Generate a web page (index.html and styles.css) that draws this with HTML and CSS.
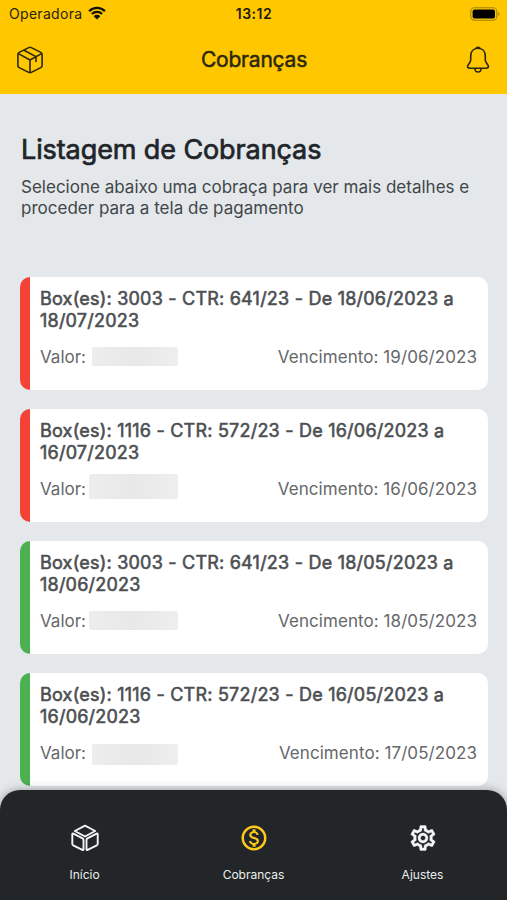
FILE: index.html
```html
<!DOCTYPE html>
<html lang="pt-BR">
<head>
<meta charset="utf-8">
<meta name="viewport" content="width=device-width, initial-scale=1">
<title>Cobranças</title>
<link rel="stylesheet" href="styles.css">
</head>
<body>
<div class="app">
  <header class="top">
    <div class="status">
      <div class="carrier"><span class="operator">Operadora</span>
        <svg class="wifi" viewBox="0 0 18 14"><path d="M1.1 5.2a11.2 11.2 0 0 1 15.8 0M3.9 8a7.2 7.2 0 0 1 10.2 0" fill="none" stroke="#111" stroke-width="2.3"/><path d="M9 13.5 5.7 10.2a4.7 4.7 0 0 1 6.6 0z" fill="#111"/></svg>
      </div>
      <time class="clock">13:12</time>
      <svg class="battery" viewBox="0 0 30 14"><rect x=".8" y=".8" width="26" height="12.4" rx="3.6" fill="none" stroke="#a18412" stroke-width="1.1"/><rect x="2.6" y="2.6" width="22.4" height="8.8" rx="2" fill="#000"/><path d="M28.3 5v4q1.3-.6 1.3-2t-1.3-2z" fill="#a18412"/></svg>
    </div>
    <div class="bar">
      <svg class="box-icon" viewBox="0 0 28 28" fill="none" stroke="#2b2710" stroke-width="1.6" stroke-linejoin="round" stroke-linecap="round"><path d="M12.7 1.6q1.3-.7 2.6 0l9.5 4.8q1.3.7 1.3 2.1v11q0 1.4-1.3 2.1l-9.5 4.8q-1.3.7-2.6 0l-9.5-4.8q-1.3-.7-1.3-2.1v-11q0-1.4 1.3-2.1z"/><path d="M2.4 7.6 14 14l11.6-6.4M14 14v12.4M8 4.3l12 6.3v4.8"/></svg>
      <h1 class="title">Cobranças</h1>
      <svg class="bell-icon" viewBox="0 0 24 28" fill="none" stroke="#2b2710" stroke-width="1.6" stroke-linejoin="round" stroke-linecap="round"><path d="M12 2.3c-4.7 0-7.3 3.5-7.3 8v3.7c0 3-3.2 4.6-3.2 6.6 0 1.3 1.2 1.6 2.5 1.6h16c1.3 0 2.5-.3 2.5-1.6 0-2-3.2-3.6-3.2-6.6v-3.7c0-4.5-2.6-8-7.3-8zM10 2.3q.3-1.1 2-1.1t2 1.1M8.7 22.5c.3 2.3 1.6 3.5 3.3 3.5s3-1.2 3.3-3.5"/></svg>
    </div>
  </header>
  <main class="content">
    <h2 class="heading">Listagem de Cobranças</h2>
    <p class="intro">Selecione abaixo uma cobraça para ver mais detalhes e<br>proceder para a tela de pagamento</p>
    <div class="list">
      <article class="card late">
        <h3 class="name">Box(es): 3003 - CTR: 641/23 - De 18/06/2023 a<br>18/07/2023</h3>
        <div class="row"><span class="label">Valor:</span><span class="redacted inset"></span><span class="due">Vencimento: 19/06/2023</span></div>
      </article>
      <article class="card late">
        <h3 class="name">Box(es): 1116 - CTR: 572/23 - De 16/06/2023 a<br>16/07/2023</h3>
        <div class="row"><span class="label">Valor:</span><span class="redacted tall"></span><span class="due">Vencimento: 16/06/2023</span></div>
      </article>
      <article class="card paid">
        <h3 class="name">Box(es): 3003 - CTR: 641/23 - De 18/05/2023 a<br>18/06/2023</h3>
        <div class="row"><span class="label">Valor:</span><span class="redacted"></span><span class="due">Vencimento: 18/05/2023</span></div>
      </article>
      <article class="card paid">
        <h3 class="name">Box(es): 1116 - CTR: 572/23 - De 16/05/2023 a<br>16/06/2023</h3>
        <div class="row"><span class="label">Valor:</span><span class="redacted inset low"></span><span class="due">Vencimento: 17/05/2023</span></div>
      </article>
    </div>
  </main>
  <nav class="tabs">
    <a class="tab">
      <svg class="tab-icon" viewBox="0 0 30 30" fill="none" stroke="#f4f5f5" stroke-width="1.9" stroke-linejoin="round"><path d="M15 2.700 25.200 8 15 13.500 4.800 8zM2.300 11.400q0-1.200 1.100-.7l9.200 4.700q.9.500.9 1.500v9.300q0 1.200-1.100.7l-9.200-4.600q-.9-.5-.9-1.500zM27.700 11.400q0-1.200-1.100-.7l-9.200 4.700q-.9.500-.9 1.500v9.300q0 1.200 1.100.7l9.200-4.600q.9-.5.9-1.500z"/></svg>
      <span class="tab-label">Início</span>
    </a>
    <a class="tab active">
      <svg class="tab-icon" viewBox="0 0 24 24" fill="currentColor"><path d="M12 2C6.480 2 2 6.480 2 12s4.480 10 10 10 10-4.480 10-10S17.520 2 12 2zm0 18c-4.410 0-8-3.590-8-8s3.590-8 8-8 8 3.590 8 8-3.590 8-8 8zm.31-8.860c-1.770-.45-2.340-.94-2.340-1.670 0-.84.79-1.430 2.100-1.430 1.380 0 1.900.66 1.940 1.640h1.710c-.05-1.340-.87-2.570-2.490-2.970V5H10.900v1.690c-1.510.32-2.720 1.300-2.720 2.810 0 1.790 1.490 2.690 3.660 3.210 1.950.46 2.340 1.150 2.340 1.870 0 .53-.39 1.390-2.100 1.390-1.600 0-2.230-.72-2.320-1.640H8.040c.1 1.700 1.360 2.660 2.860 2.970V19h2.340v-1.670c1.520-.29 2.720-1.160 2.730-2.770-.01-2.200-1.900-2.960-3.660-3.420z"/></svg>
      <span class="tab-label">Cobranças</span>
    </a>
    <a class="tab">
      <svg class="tab-icon" viewBox="0 0 24 24" fill="currentColor" stroke="currentColor" stroke-width=".3"><path d="M19.430 12.980c.04-.32.07-.64.07-.98s-.03-.66-.07-.98l2.110-1.650c.19-.15.24-.42.12-.64l-2-3.460c-.09-.16-.26-.25-.44-.25-.06 0-.12.01-.17.03l-2.490 1c-.52-.4-1.080-.73-1.690-.98l-.38-2.650C14.460 2.180 14.250 2 14 2h-4c-.25 0-.46.18-.49.42l-.38 2.650c-.61.25-1.170.59-1.690.98l-2.490-1c-.06-.02-.12-.03-.18-.03-.17 0-.34.09-.43.25l-2 3.460c-.13.22-.07.49.12.64l2.110 1.650c-.04.32-.07.65-.07.98s.03.66.07.98l-2.110 1.650c-.19.15-.24.42-.12.64l2 3.460c.09.16.26.25.44.25.06 0 .12-.01.17-.03l2.490-1c.52.4 1.080.73 1.690.98l.38 2.650c.03.24.24.42.49.42h4c.25 0 .46-.18.49-.42l.38-2.650c.61-.25 1.170-.59 1.690-.98l2.490 1c.06.02.12.03.18.03.17 0 .34-.09.43-.25l2-3.460c.12-.22.07-.49-.12-.64l-2.110-1.650zm-1.980-1.710c.04.31.05.52.05.73 0 .21-.02.43-.05.73l-.14 1.130.89.7 1.080.84-.7 1.210-1.270-.51-1.040-.42-.9.68c-.43.32-.84.56-1.250.73l-1.060.43-.16 1.130-.2 1.350h-1.400l-.19-1.350-.16-1.130-1.060-.43c-.43-.18-.83-.41-1.230-.71l-.91-.7-1.060.43-1.270.51-.7-1.210 1.080-.84.89-.7-.14-1.130c-.03-.31-.05-.54-.05-.74s.02-.43.05-.73l.14-1.130-.89-.7-1.080-.84.7-1.210 1.270.51 1.040.42.9-.68c.43-.32.84-.56 1.250-.73l1.060-.43.16-1.130.2-1.350h1.390l.19 1.350.16 1.130 1.060.43c.43.18.83.41 1.230.71l.91.7 1.060-.43 1.270-.51.7 1.210-1.070.85-.89.7.14 1.130zM12 8c-2.210 0-4 1.790-4 4s1.790 4 4 4 4-1.790 4-4-1.790-4-4-4zm0 6c-1.100 0-2-.9-2-2s.9-2 2-2 2 .9 2 2-.9 2-2 2z"/></svg>
      <span class="tab-label">Ajustes</span>
    </a>
  </nav>
</div>
</body>
</html>
```
FILE: styles.css
```css
* { box-sizing: border-box; }
body { margin: 0; font-family: Inter, "Liberation Sans", sans-serif; color: #212529; background: #e4e8eb; }
h1, h2, h3, p { margin: 0; }
svg { display: block; }
.app { display: flex; flex-direction: column; height: 900px; overflow: hidden; }

.top { height: 94px; flex: none; background: #ffc700; }
.status { display: grid; grid-template-columns: 1fr auto 1fr; align-items: center; height: 27px; padding: 0 8px 0 9px; }
.carrier { display: flex; align-items: center; gap: 6px; }
.operator { font-size: 14px; letter-spacing: .3px; color: #29240c; }
.wifi { width: 18px; height: 14px; margin-top: -2px; }
.clock { font-size: 14px; font-weight: 600; letter-spacing: .5px; color: #1d1a08; }
.battery { width: 30px; height: 14px; justify-self: end; margin-right: -1px; }
.bar { display: flex; align-items: center; justify-content: space-between; height: 66px; padding: 0 17px 0 16px; }
.box-icon { width: 28px; height: 28px; }
.bell-icon { width: 24px; height: 28px; }
.title { margin: -2px 2px 0 0; font-size: 21px; font-weight: 400; letter-spacing: -.2px; color: #2b2710; -webkit-text-stroke: .5px; }

.content { flex: 1; padding: 39px 19px 0 20px; }
.heading { margin-left: 1px; font-size: 27px; line-height: 34px; font-weight: 400; letter-spacing: -.1px; white-space: nowrap; -webkit-text-stroke: .7px; }
.intro { margin: 10px 0 0 1px; font-size: 17px; line-height: 21px; letter-spacing: .01px; color: #414649; white-space: nowrap; }
.list { display: flex; flex-direction: column; gap: 19.5px; margin-top: 58px; }
.card { height: 112.5px; padding: 11px 11px 0 10px; border-left: 10px solid; border-radius: 10px; background: #fff; }
.late { border-left-color: #f44336; }
.paid { border-left-color: #4caf50; }
.name { font-size: 18px; line-height: 22px; font-weight: 400; letter-spacing: .22px; color: #4d5053; white-space: nowrap; -webkit-text-stroke: .6px; }
.row { display: flex; align-items: center; height: 26px; margin-top: 12px; font-size: 17px; color: #65686a; white-space: nowrap; }
.redacted { width: 89px; height: 19px; margin-left: 3px; margin-top: -2px; border-radius: 2px; background: linear-gradient(90deg, #ededee, #e8e8e9 50%, #eeeeef); filter: blur(.7px); }
.inset { width: 86px; margin-left: 6px; }
.tall { height: 25px; margin-top: -6px; }
.low { height: 21px; margin-top: 2px; }
.due { margin-left: auto; letter-spacing: .07px; }

.tabs { position: relative; z-index: 1; display: grid; grid-template-columns: repeat(3, 1fr); flex: none; height: 110px; border-radius: 20px 20px 0 0; background: #222628; box-shadow: 0 0 10px rgba(0, 0, 0, .35); margin-top: -20px; }
.tab { display: flex; flex-direction: column; align-items: center; padding-top: 33px; color: #f4f5f5; }
.tab-icon { width: 30px; height: 30px; }
.tab-label { margin-top: 14px; font-size: 12px; line-height: 16px; color: #eceded; }
.active { color: #ffc91c; }
```
